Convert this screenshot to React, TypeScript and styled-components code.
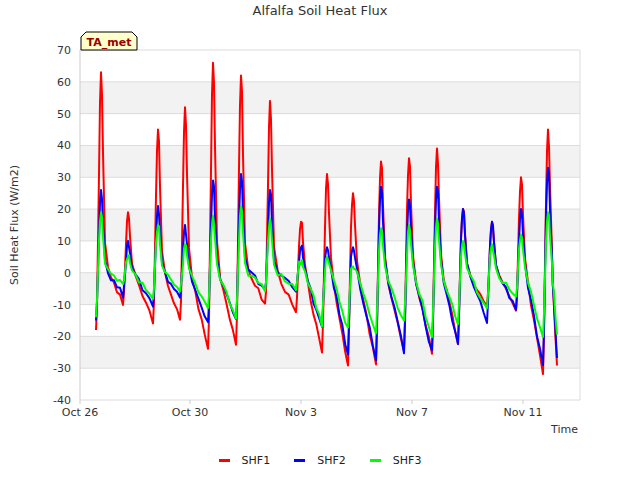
import styled, { createGlobalStyle } from 'styled-components';

const Global = createGlobalStyle`
  body { margin: 0; background: #fff; font-family: "DejaVu Sans", sans-serif; }
`;

const Page = styled.div`
  width: 640px;
  height: 480px;
  display: flex;
  flex-direction: column;
`;
const Title = styled.div`
  height: 22px;
  line-height: 22px;
  text-align: center;
  font-size: 13px;
  color: #333;
`;
const Legend = styled.div`
  height: 40px;
  display: flex;
  justify-content: center;
  align-items: center;
  gap: 24px;
  font-size: 11px;
  color: #222;
`;
const Item = styled.div`
  display: flex;
  align-items: center;
  gap: 12px;
`;
const Swatch = styled.span<{ c: string }>`
  width: 11px;
  height: 3px;
  background: ${(p) => p.c};
`;

const X0 = 80, X1 = 580, Y0 = 50, Y1 = 400;
const vy = (v: number) => Y0 + ((70 - v) * (Y1 - Y0)) / 110;

const peakX = [101, 128, 158, 185, 213, 241, 270, 301, 327, 353, 381, 409, 437, 463, 492, 521, 548];

const series = [
  {
    name: 'SHF1', color: '#ff0000',
    peaks: [63, 19, 45, 52, 66, 62, 54, 16, 31, 25, 35, 36, 39, 20, 16, 30, 45],
    mins: [-18, -10, -15, -15, -24, -22, -10, -13, -26, -29, -29, -25, -25, -22, -11, -12, -31, -29],
  },
  {
    name: 'SHF2', color: '#0000ff',
    peaks: [26, 10, 21, 15, 29, 31, 26, 8, 8, 8, 27, 23, 27, 20, 16, 20, 33],
    mins: [-15, -7, -10, -8, -16, -15, -5, -5, -18, -26, -27, -25, -25, -23, -15, -11, -30, -27],
  },
  {
    name: 'SHF3', color: '#00ff00',
    peaks: [19, 5, 15, 9, 18, 21, 17, 3, 5, 2, 14, 15, 17, 10, 9, 12, 19],
    mins: [-14, -4, -8, -6, -12, -14, -5, -5, -16, -18, -20, -16, -20, -16, -11, -8, -21, -20],
  },
];

function buildPath(peaks: number[], mins: number[], k: number) {
  const pts: [number, number][] = [];
  let seed = k * 17 + 3;
  const rnd = () => {
    seed = (seed * 9301 + 49297) % 233280;
    return seed / 233280 - 0.5;
  };
  pts.push([96, mins[0]]);
  peakX.forEach((px, i) => {
    const p = peaks[i];
    const m = mins[i];
    pts.push([px - 4, m * 0.6]);
    pts.push([px - 2, p * 0.5 + rnd() * 4]);
    pts.push([px - 1, p * 0.85]);
    pts.push([px, p]);
    pts.push([px + 1, p * 0.9 + rnd() * 3]);
    pts.push([px + 2, p * 0.6]);
    pts.push([px + 4, p * 0.15]);
    const next = i + 1 < peakX.length ? peakX[i + 1] : 562;
    const nm = mins[i + 1];
    const steps = 6;
    for (let s = 1; s <= steps; s++) {
      const x = px + 4 + ((next - 5 - px - 4) * s) / steps;
      const v = p * 0.05 + (nm - p * 0.05) * (s / steps) + rnd() * 2;
      pts.push([x, v]);
    }
  });
  return pts.map(([x, v], i) => `${i ? 'L' : 'M'}${x.toFixed(1)},${vy(v).toFixed(1)}`).join(' ');
}

const yTicks = [70, 60, 50, 40, 30, 20, 10, 0, -10, -20, -30, -40];
const xTicks = [
  { x: 80, t: 'Oct 26' },
  { x: 190, t: 'Oct 30' },
  { x: 301, t: 'Nov 3' },
  { x: 412, t: 'Nov 7' },
  { x: 523, t: 'Nov 11' },
];

export default function App() {
  return (
    <Page>
      <Global />
      <Title>Alfalfa Soil Heat Flux</Title>
      <svg width="640" height="418" viewBox="0 22 640 418" style={{ display: 'block' }}>
        {[50, 30, 10, -10, -30].map((v) => (
          <rect key={v} x={X0} y={vy(v + 10)} width={X1 - X0} height={vy(v) - vy(v + 10)} fill="#f2f2f2" />
        ))}
        {yTicks.map((v) => (
          <g key={v}>
            <line x1={X0} x2={X1} y1={vy(v)} y2={vy(v)} stroke="#dcdcdc" />
            <text x={71} y={vy(v) + 4} fontSize="11" fill="#333" textAnchor="end">{v}</text>
          </g>
        ))}
        <line x1={X0} x2={X0} y1={Y0} y2={Y1} stroke="#ccc" />
        <line x1={X1} x2={X1} y1={Y0} y2={Y1} stroke="#dcdcdc" />
        {xTicks.map((t) => (
          <g key={t.t}>
            <line x1={t.x} x2={t.x} y1={Y1} y2={Y1 + 4} stroke="#ccc" />
            <text x={t.x} y={416} fontSize="11" fill="#333" textAnchor="middle">{t.t}</text>
          </g>
        ))}
        <text x={578} y={433} fontSize="11" fill="#333" textAnchor="end">Time</text>
        <text x={18} y={225} fontSize="11" fill="#333" textAnchor="middle" transform="rotate(-90 18 225)">
          Soil Heat Flux (W/m2)
        </text>
        {series.map((s, k) => (
          <path key={s.name} d={buildPath(s.peaks, s.mins, k)} fill="none" stroke={s.color} strokeWidth="2" strokeLinejoin="round" />
        ))}
        <polygon points="81,50 81,37 86,32 132,32 137,37 137,50" fill="#ffffcc" stroke="#000" />
        <text x={109} y={46} fontSize="11" fontWeight="bold" fill="#990000" textAnchor="middle">TA_met</text>
      </svg>
      <Legend>
        {series.map((s) => (
          <Item key={s.name}>
            <Swatch c={s.color} />
            {s.name}
          </Item>
        ))}
      </Legend>
    </Page>
  );
}
